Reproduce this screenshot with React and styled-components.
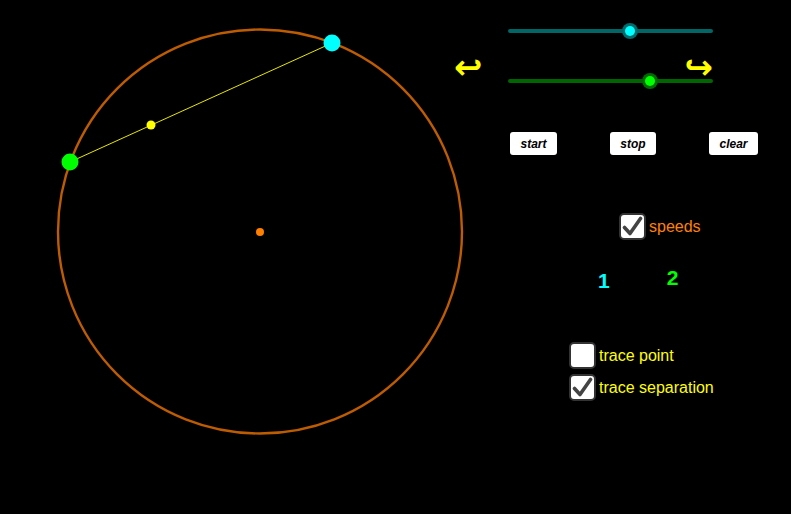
import React from "react";
import styled, { createGlobalStyle } from "styled-components";

const GlobalStyle = createGlobalStyle`
  html, body {
    margin: 0;
    padding: 0;
    background: #000;
  }
  body {
    font-family: "Liberation Sans", Arial, sans-serif;
  }
`;

const Page = styled.div`
  display: flex;
  width: 791px;
  height: 514px;
  background: #000;
  overflow: hidden;
`;

const Canvas = styled.svg`
  flex: 0 0 456px;
  height: 514px;
  overflow: visible;
`;

const Panel = styled.div`
  position: relative;
  z-index: 1;
  display: flex;
  flex-direction: column;
  width: 335px;
  padding-top: 23px;
`;

const SliderRow = styled.div`
  position: relative;
  z-index: 1;
  width: 205px;
  height: 16px;
  margin-left: 52px;
`;

const Track = styled.div`
  position: absolute;
  left: 0;
  right: 0;
  top: 6px;
  height: 4px;
  border-radius: 2px;
  background: ${(p) => p.$color};
`;

const Knob = styled.div`
  position: absolute;
  top: 0;
  width: 16px;
  height: 16px;
  margin-left: -8px;
  border-radius: 50%;
  box-sizing: border-box;
  background: ${(p) => p.$ring};
  display: flex;
  align-items: center;
  justify-content: center;
  &::after {
    content: "";
    width: 10px;
    height: 10px;
    border-radius: 50%;
    background: ${(p) => p.$fill};
  }
`;

const ArrowRow = styled.div`
  display: flex;
  justify-content: space-between;
  align-items: flex-start;
  width: 259px;
  margin-left: -2px;
  height: 34px;
`;

const Arrow = styled.span`
  font-family: "DejaVu Sans", sans-serif;
  font-weight: bold;
  font-size: 34px;
  line-height: 34px;
  height: 34px;
  margin-top: 11px;
  color: #ffff00;
`;

const ButtonRow = styled.div`
  display: flex;
  gap: 53px;
  margin-left: 54px;
  margin-top: 43px;
`;

const Button = styled.div`
  width: ${(p) => p.$w}px;
  height: 23px;
  box-sizing: border-box;
  border-radius: 3px;
  background: #fff;
  display: flex;
  align-items: center;
  justify-content: center;
  font-family: "Liberation Sans", Arial, sans-serif;
  font-size: 12px;
  font-weight: bold;
  font-style: italic;
  color: #000;
`;

const CheckRow = styled.div`
  display: flex;
  align-items: center;
  gap: 3px;
  height: 27px;
  margin-left: ${(p) => p.$left}px;
  margin-top: ${(p) => p.$top}px;
`;

const Box = styled.div`
  width: 27px;
  height: 27px;
  box-sizing: border-box;
  border: 2px solid #333;
  border-radius: 5px;
  background: #fff;
  display: flex;
  align-items: center;
  justify-content: center;
`;

const Label = styled.span`
  font-size: 16px;
  color: ${(p) => p.$color};
`;

const Numbers = styled.div`
  display: flex;
  margin-top: 26px;
  height: 24px;
`;

const Num = styled.span`
  font-size: 21px;
  font-weight: bold;
  color: ${(p) => p.$color};
  margin-left: ${(p) => p.$left}px;
  margin-top: ${(p) => p.$top}px;
`;

const Check = () => (
  <svg width="21" height="21" viewBox="0 0 21 21">
    <path
      d="M2.5 11.5 L8 17.5 L18.5 2.5"
      fill="none"
      stroke="#444"
      strokeWidth="3.6"
      strokeLinecap="round"
      strokeLinejoin="round"
    />
  </svg>
);

const Checkbox = ({ checked, label, color, left, top }) => (
  <CheckRow $left={left} $top={top}>
    <Box>{checked && <Check />}</Box>
    <Label $color={color}>{label}</Label>
  </CheckRow>
);

const App = () => (
  <>
    <GlobalStyle />
    <Page>
      <Canvas viewBox="0 0 456 514">
        <circle cx="260" cy="231.5" r="202" fill="none" stroke="#bd5c00" strokeWidth="2.4" />
        <line x1="70" y1="162" x2="332" y2="43" stroke="#e6e600" strokeWidth="1" />
        <circle cx="260" cy="232" r="4" fill="#ff7f00" />
        <circle cx="151" cy="125" r="4.5" fill="#ffff00" />
        <circle cx="70" cy="162" r="8.5" fill="#00ff00" />
        <circle cx="332" cy="43" r="8.5" fill="#00ffff" />
      </Canvas>
      <Panel>
        <SliderRow>
          <Track $color="#006666" />
          <Knob style={{ left: 122 }} $ring="#006b6b" $fill="#00ffff" />
        </SliderRow>
        <ArrowRow>
          <Arrow>↩</Arrow>
          <Arrow>↪</Arrow>
        </ArrowRow>
        <SliderRow>
          <Track $color="#006600" />
          <Knob style={{ left: 142 }} $ring="#006b00" $fill="#00ff00" />
        </SliderRow>
        <ButtonRow>
          <Button $w={47}>start</Button>
          <Button $w={46}>stop</Button>
          <Button $w={49}>clear</Button>
        </ButtonRow>
        <Checkbox checked label="speeds" color="#ff8000" left={163} top={58} />
        <Numbers>
          <Num $color="#00ffff" $left={142} $top={3}>1</Num>
          <Num $color="#00ff00" $left={57} $top={0}>2</Num>
        </Numbers>
        <Checkbox label="trace point" color="#ffff00" left={113} top={52} />
        <Checkbox checked label="trace separation" color="#ffff00" left={113} top={5} />
      </Panel>
    </Page>
  </>
);

export default App;
